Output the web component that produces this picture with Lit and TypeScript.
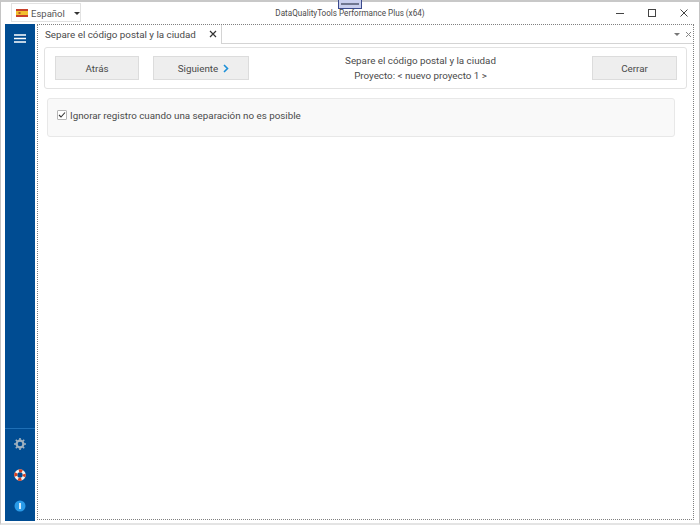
import { LitElement, html, css } from "lit";
import { customElement } from "lit/decorators.js";

@customElement("app-root")
export class AppRoot extends LitElement {
  static styles = css`
    :host { display: block; width: 700px; height: 525px; position: relative; overflow: hidden; background: #fff;
      font-family: Roboto, "Noto Sans", sans-serif; font-size: 9.8px; color: #4a4a4a; }
    * { box-sizing: border-box; }
    .window { width: 700px; height: 525px; display: flex; flex-direction: column; border: 1px solid #c4c4c4; border-bottom: 2px solid #e4e4e4; border-top: 2px solid #c8c8c8; }
    .title { height: 22px; flex: none; display: grid; grid-template-columns: 1fr auto 1fr; align-items: center; }
    .lang { justify-self: start; width: 70px; height: 19px; margin: -1px 0 0 10px; border: 1px solid #e2e2e2; display: flex; align-items: center; padding: 1px 0 0 4px; gap: 3px; font-size: 9.5px; color: #555; }
    .lang svg { flex: none; }
    .caret { width: 0; height: 0; border: 3px solid transparent; border-top: 3px solid #333; border-bottom: 0; margin-left: 6px; flex: none; }
    .app-name { font-size: 8.15px; color: #4a4a4a; }
    .ctrls { justify-self: end; display: flex; align-items: center; gap: 22px; padding-right: 10px; }
    .main { flex: 1; display: flex; padding: 0 5px 2px 4px; min-height: 0; }
    .side { width: 30px; flex: none; background: #004c92; display: flex; flex-direction: column; align-items: center; padding-top: 10px; }
    .spacer { flex: 1; border-bottom: 1px solid #1f6fb5; margin-bottom: 9px; width: 100%; }
    .side svg { display: block; }
    .side .gear { margin-bottom: 19px; } .side .ring { margin-bottom: 19px; } .side .info { margin-bottom: 9px; }
    .content { flex: 1; margin-left: 2px; margin-bottom: 1px; border: 1px dotted #808080; min-width: 0; display: flex; flex-direction: column; }
    .tabs { height: 19px; flex: none; display: flex; border-bottom: 1px solid #d4d4d4; position: relative; }
    .tab { width: 184px; height: 19px; border-right: 1px solid #d4d4d4; background: #fff; display: flex; align-items: center; justify-content: space-between; padding: 0 4px 1px 7px; color: #4a4a4a; font-size: 9.8px; }
    .tab-end { margin-left: auto; display: flex; align-items: center; gap: 5px; padding-right: 1px; }
    .tri { width: 0; height: 0; border: 3px solid transparent; border-top: 3px solid #777; border-bottom: 0; }
    .toolbar { height: 42px; margin: 3px 6px 0 6px; border: 1px solid #e2e2e2; border-radius: 3px; display: flex; align-items: center; padding: 0 9px 0 10px; flex: none; }
    .btn { height: 24px; background: #eeeeee; border: 1px solid #dcdcdc; display: flex; align-items: center; justify-content: center; gap: 5px; color: #4a4a4a; font-size: 9.8px; flex: none; }
    .back { width: 84px; margin-right: 14px; }
    .next { width: 96px; padding-left: 5px; }
    .close { width: 85px; }
    .info-text { flex: 1; text-align: center; line-height: 15px; font-size: 9.8px; color: #4a4a4a; }
    .option { height: 39px; margin: 9px 18px 0 9px; background: #f9f9f9; border: 1px solid #e8e8e8; border-radius: 3px; display: flex; align-items: center; padding: 0 0 5px 9px; gap: 3px; flex: none; font-size: 9.8px; color: #4a4a4a; }
    .check { width: 10px; height: 10px; border: 1px solid #b5b5b5; background: #fff; border-radius: 1px; display: flex; align-items: center; justify-content: center; }
    .handle { position: absolute; left: 338px; top: 0; width: 24px; height: 9px; background: #c9cfee; border: 1px solid #3b4a8c; border-top: 0; display: flex; align-items: center; justify-content: center; }
    .handle i { display: block; width: 18px; height: 2px; background: #6f7690; }
  `;

  render() {
    return html`
      <div class="window">
        <div class="title">
          <div class="lang">
            <svg width="12" height="8" viewBox="0 0 12 8"><rect width="12" height="8" fill="#c8402a"/><rect y="2" width="12" height="4" fill="#f2bf2f"/><rect x="2.5" y="3" width="2" height="2" fill="#b5562a"/></svg>
            <span>Español</span><span class="caret"></span>
          </div>
          <div class="app-name">DataQualityTools Performance Plus (x64)</div>
          <div class="ctrls">
            <svg width="10" height="10" viewBox="0 0 10 10"><path d="M1 5.5H9" stroke="#444" fill="none"/></svg>
            <svg width="10" height="10" viewBox="0 0 10 10"><rect x="1.5" y="1.5" width="7" height="7" stroke="#444" fill="none"/></svg>
            <svg width="10" height="10" viewBox="0 0 10 10"><path d="M1.5 1.5L8.5 8.5M8.5 1.5L1.5 8.5" stroke="#444" fill="none"/></svg>
          </div>
        </div>
        <div class="main">
          <nav class="side">
            <svg width="12" height="9" viewBox="0 0 12 9"><path d="M0 1H12M0 4.5H12M0 8H12" stroke="#fff" stroke-width="1.4"/></svg>
            <div class="spacer"></div>
            <svg class="gear" width="12" height="12" viewBox="0 0 12 12"><circle cx="6" cy="6" r="3.4" fill="none" stroke="#9fb0bf" stroke-width="2.2"/><path d="M6 0V2M6 10V12M0 6H2M10 6H12M1.8 1.8L3.2 3.2M8.8 8.8L10.2 10.2M1.8 10.2L3.2 8.8M8.8 3.2L10.2 1.8" stroke="#9fb0bf" stroke-width="1.6"/></svg>
            <svg class="ring" width="12" height="12" viewBox="0 0 12 12"><circle cx="6" cy="6" r="4.2" fill="none" stroke="#f2f2f2" stroke-width="3"/><circle cx="6" cy="6" r="4.2" fill="none" stroke="#d8401f" stroke-width="3" stroke-dasharray="3.3 3.3" stroke-dashoffset="1.6"/></svg>
            <svg class="info" width="12" height="12" viewBox="0 0 12 12"><circle cx="6" cy="6" r="5.5" fill="#2a9be8"/><path d="M6 3V9" stroke="#fff" stroke-width="1.6"/></svg>
          </nav>
          <div class="content">
            <div class="tabs">
              <div class="tab"><span>Separe el código postal y la ciudad</span>
                <svg width="8" height="8" viewBox="0 0 8 8"><path d="M1 1L7 7M7 1L1 7" stroke="#333" stroke-width="1.2" fill="none"/></svg>
              </div>
              <div class="tab-end"><span class="tri"></span>
                <svg width="7" height="7" viewBox="0 0 7 7"><path d="M1 1L6 6M6 1L1 6" stroke="#888" fill="none"/></svg>
              </div>
            </div>
            <div class="toolbar">
              <div class="btn back">Atrás</div>
              <div class="btn next">Siguiente
                <svg width="6" height="9" viewBox="0 0 6 9"><path d="M1 1L4.5 4.5L1 8" stroke="#1b8fd8" stroke-width="1.6" fill="none"/></svg>
              </div>
              <div class="info-text">Separe el código postal y la ciudad<br />Proyecto: &lt; nuevo proyecto 1 &gt;</div>
              <div class="btn close">Cerrar</div>
            </div>
            <div class="option">
              <span class="check"><svg width="8" height="8" viewBox="0 0 8 8"><path d="M1 4L3 6L7 1.5" stroke="#333" stroke-width="1.1" fill="none"/></svg></span>
              <span>Ignorar registro cuando una separación no es posible</span>
            </div>
          </div>
        </div>
      </div>
      <div class="handle"><i></i></div>
    `;
  }
}
